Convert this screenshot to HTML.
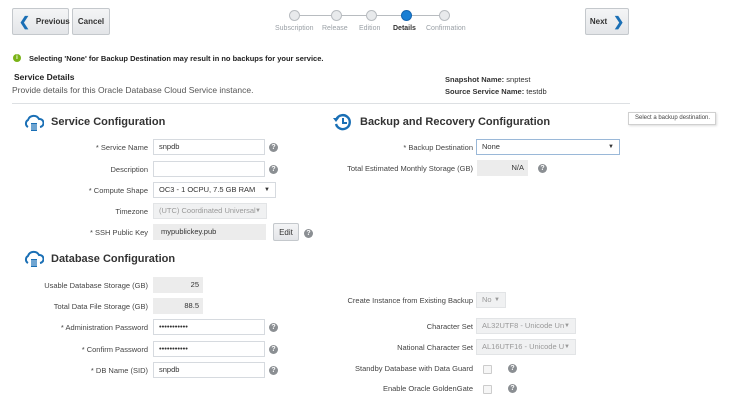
<!DOCTYPE html>
<html><head><style>
body{margin:0;width:740px;height:402px;background:#fff;font-family:"Liberation Sans",Arial,sans-serif;position:relative;overflow:hidden;color:#333}
.a{position:absolute;white-space:nowrap}
.btn{position:absolute;background:linear-gradient(#f4f5f6,#e3e5e8);border:1px solid #c4c8cc;border-radius:2px;font-size:8px;font-weight:bold;color:#333;box-sizing:border-box;display:flex;align-items:center;justify-content:center}
.lbl{position:absolute;font-size:7.5px;color:#444;text-align:right;white-space:nowrap}
.in{position:absolute;height:16px;border:1px solid #d6dadf;background:#fff;box-sizing:border-box;font-size:7.5px;color:#333;padding-left:5px;line-height:14px;white-space:nowrap;overflow:hidden}
.ro{background:#ececec;border-color:#ececec}
.dis{background:#f0f1f2;border-color:#e2e4e6;color:#999}
.help{position:absolute;width:9px;height:9px;border-radius:50%;background:#8b8f93;color:#fff;font-size:7px;font-weight:bold;text-align:center;line-height:9px}
.dd{position:absolute;right:5px;top:0;font-size:6px}
.c{position:absolute;width:11px;height:11px;border-radius:50%;border:1.5px solid #b8bcc0;background:#e8eaec;box-sizing:border-box;top:10px}
.tl{position:absolute;font-size:7px;color:#9aa0a6;top:25px}
.cb{position:absolute;width:7px;height:7px;border:1px solid #ccc;border-radius:1px;background:#f6f6f6}
h2{position:absolute;margin:0;font-size:11px;font-weight:bold;color:#333;white-space:nowrap}
</style></head><body>
<div class="btn" style="left:12px;top:8px;width:57px;height:27px;justify-content:flex-start;padding-left:6px"><span style="color:#1a6fb5;font-size:13px;margin-right:6px;font-weight:bold">&#x276E;</span>Previous</div>
<div class="btn" style="left:72px;top:8px;width:38px;height:27px">Cancel</div>
<div class="btn" style="left:585px;top:8px;width:44px;height:27px">Next<span style="color:#1a6fb5;font-size:13px;margin-left:6px;font-weight:bold">&#x276F;</span></div>
<div class="a" style="left:300px;top:15px;width:145px;height:1px;background:#b8bcc0"></div>
<div class="c" style="left:289px"></div><div class="c" style="left:331px"></div><div class="c" style="left:366px"></div>
<div class="c" style="left:401px;background:#1a7fd4;border-color:#1565b0"></div><div class="c" style="left:439px"></div>
<div class="tl" style="left:275px">Subscription</div><div class="tl" style="left:322px">Release</div><div class="tl" style="left:359px">Edition</div>
<div class="tl" style="left:393px;color:#333;font-weight:bold">Details</div><div class="tl" style="left:426px">Confirmation</div>
<div class="a" style="left:13px;top:54px;width:8px;height:8px;border-radius:50%;background:#7ab317;color:#fff;font-size:6px;text-align:center;line-height:8px;font-weight:bold">i</div>
<div class="a" style="left:29px;top:54px;font-size:7.5px;font-weight:bold;color:#222">Selecting 'None' for Backup Destination may result in no backups for your service.</div>
<div class="a" style="left:14px;top:72px;font-size:8.5px;font-weight:bold;color:#222">Service Details</div>
<div class="a" style="left:12px;top:85px;font-size:8.5px;color:#555">Provide details for this Oracle Database Cloud Service instance.</div>
<div class="a" style="left:445px;top:75px;font-size:7.5px;color:#333"><b>Snapshot Name:</b> snptest</div>
<div class="a" style="left:445px;top:87px;font-size:7.5px;color:#333"><b>Source Service Name:</b> testdb</div>
<div class="a" style="left:12px;top:103px;width:618px;height:1px;background:#dde0e3"></div>
<svg class="a" style="left:24px;top:114px" width="20" height="18" viewBox="0 0 20 18"><path d="M4 13 A4 4 0 0 1 4 6 A6 6 0 0 1 15 5 A4 4 0 0 1 16 13" fill="none" stroke="#1a6fb5" stroke-width="2"/><rect x="7" y="9" width="6" height="8" fill="#1a6fb5"/><path d="M7 11h6M7 13h6M7 15h6" stroke="#fff" stroke-width=".7"/></svg>
<h2 style="left:51px;top:116px">Service Configuration</h2>
<svg class="a" style="left:333px;top:113px" width="18" height="18" viewBox="0 0 18 18"><path d="M3.5 6 A7 7 0 1 1 3 11" fill="none" stroke="#1a6fb5" stroke-width="2.4"/><path d="M0 5 L6 5 L3 9 Z" fill="#1a6fb5"/><path d="M10 5v5h4" fill="none" stroke="#1a6fb5" stroke-width="2"/></svg>
<h2 style="left:360px;top:116px">Backup and Recovery Configuration</h2>
<div class="a" style="left:628px;top:112px;width:88px;height:13px;border:1px solid #d0d0d0;box-sizing:border-box;font-size:6px;color:#444;line-height:11px;padding-left:6px;box-shadow:1px 1px 2px #ddd">Select a backup destination.</div>

<div class="lbl" style="right:592px;top:143px">* Service Name</div><div class="in" style="left:153px;top:139px;width:112px">snpdb</div><div class="help" style="left:269px;top:143px">?</div>
<div class="lbl" style="right:592px;top:165px">Description</div><div class="in" style="left:153px;top:161px;width:112px"></div><div class="help" style="left:269px;top:165px">?</div>
<div class="lbl" style="right:592px;top:186px">* Compute Shape</div><div class="in" style="left:153px;top:182px;width:123px">OC3 - 1 OCPU, 7.5 GB RAM<span class="dd">&#9660;</span></div>
<div class="lbl" style="right:592px;top:207px">Timezone</div><div class="in dis" style="left:153px;top:203px;width:114px">(UTC) Coordinated Universal<span class="dd">&#9660;</span></div>
<div class="lbl" style="right:592px;top:228px">* SSH Public Key</div><div class="in ro" style="left:153px;top:224px;width:113px;padding-left:7px">mypublickey.pub</div>
<div class="btn" style="left:273px;top:223px;width:26px;height:18px;font-weight:normal;font-size:8px">Edit</div><div class="help" style="left:304px;top:229px">?</div>

<svg class="a" style="left:24px;top:250px" width="20" height="18" viewBox="0 0 20 18"><path d="M4 13 A4 4 0 0 1 4 6 A6 6 0 0 1 15 5 A4 4 0 0 1 16 13" fill="none" stroke="#1a6fb5" stroke-width="2"/><rect x="7" y="9" width="6" height="8" fill="#1a6fb5"/><path d="M7 11h6M7 13h6M7 15h6" stroke="#fff" stroke-width=".7"/></svg>
<h2 style="left:51px;top:253px">Database Configuration</h2>
<div class="lbl" style="right:592px;top:281px">Usable Database Storage (GB)</div><div class="in ro" style="left:153px;top:277px;width:50px;text-align:right;padding-right:3px">25</div>
<div class="lbl" style="right:592px;top:302px">Total Data File Storage (GB)</div><div class="in ro" style="left:153px;top:298px;width:50px;text-align:right;padding-right:3px">88.5</div>
<div class="lbl" style="right:592px;top:323px">* Administration Password</div><div class="in" style="left:153px;top:319px;width:112px">•••••••••••</div><div class="help" style="left:269px;top:323px">?</div>
<div class="lbl" style="right:592px;top:345px">* Confirm Password</div><div class="in" style="left:153px;top:341px;width:112px">•••••••••••</div><div class="help" style="left:269px;top:345px">?</div>
<div class="lbl" style="right:592px;top:366px">* DB Name (SID)</div><div class="in" style="left:153px;top:362px;width:112px">snpdb</div><div class="help" style="left:269px;top:366px">?</div>

<div class="lbl" style="right:267px;top:143px">* Backup Destination</div><div class="in" style="left:476px;top:139px;width:144px;border-color:#9ab8d8">None<span class="dd">&#9660;</span></div>
<div class="lbl" style="right:267px;top:164px">Total Estimated Monthly Storage (GB)</div><div class="in ro" style="left:477px;top:160px;width:51px;text-align:right;padding-right:3px">N/A</div><div class="help" style="left:538px;top:164px">?</div>
<div class="lbl" style="right:267px;top:296px">Create Instance from Existing Backup</div><div class="in dis" style="left:476px;top:292px;width:30px">No<span class="dd">&#9660;</span></div>
<div class="lbl" style="right:267px;top:322px">Character Set</div><div class="in dis" style="left:476px;top:318px;width:100px">AL32UTF8 - Unicode Un<span class="dd">&#9660;</span></div>
<div class="lbl" style="right:267px;top:343px">National Character Set</div><div class="in dis" style="left:476px;top:339px;width:100px">AL16UTF16 - Unicode U<span class="dd">&#9660;</span></div>
<div class="lbl" style="right:267px;top:364px">Standby Database with Data Guard</div><div class="cb" style="left:483px;top:365px"></div><div class="help" style="left:508px;top:364px">?</div>
<div class="lbl" style="right:267px;top:384px">Enable Oracle GoldenGate</div><div class="cb" style="left:483px;top:385px"></div><div class="help" style="left:508px;top:384px">?</div>
</body></html>
